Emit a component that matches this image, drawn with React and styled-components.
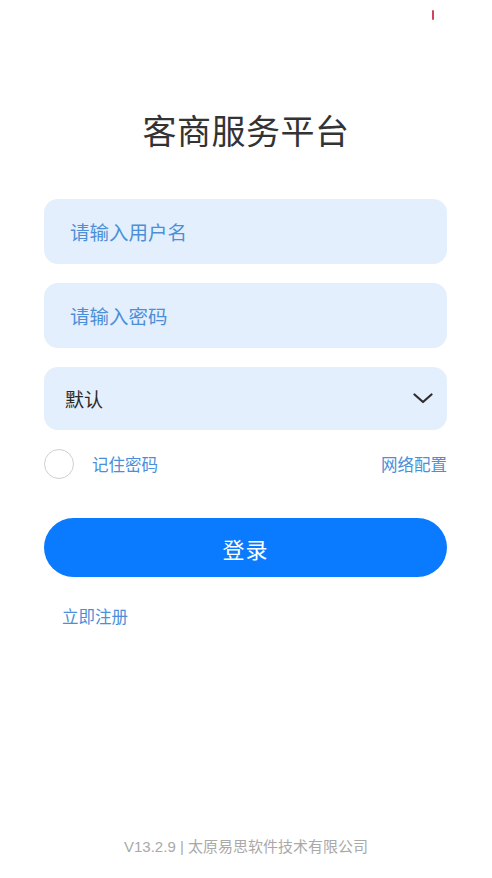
import React from "react";
import styled, { createGlobalStyle } from "styled-components";

const GlobalStyle = createGlobalStyle`
  html, body { margin: 0; padding: 0; background: #ffffff; }
  body { font-family: "Noto Sans CJK SC", "Noto Sans", sans-serif; }
  * { box-sizing: border-box; }
`;

const Page = styled.div`
  min-height: 100vh;
  display: flex;
  flex-direction: column;
  background: #ffffff;
`;

const StatusBar = styled.div`
  height: 30px;
  display: flex;
  justify-content: flex-end;
  align-items: flex-start;
  padding: 10px 58px 0 0;
`;

const RecordDot = styled.span`
  width: 2px;
  height: 10px;
  border-radius: 1px;
  background: #d0435f;
`;

const Title = styled.h1`
  margin: 80px 0 0;
  text-align: center;
  font-size: 34px;
  line-height: 40px;
  font-weight: 400;
  color: #333333;
  letter-spacing: 0.5px;
`;

const Form = styled.div`
  margin-top: 49px;
  padding: 0 45px 0 44px;
  display: flex;
  flex-direction: column;
`;

const Field = styled.input`
  height: 65px;
  border: none;
  outline: none;
  border-radius: 14px;
  background: #e4effd;
  padding: 0 26px;
  font-family: inherit;
  font-size: 19.5px;
  color: #333;
  margin-bottom: ${(p) => p.$gap || 0}px;
  &::placeholder { color: #4d8fd6; }
`;

const SelectBox = styled.div`
  height: 63px;
  border-radius: 14px;
  background: #e4effd;
  display: flex;
  align-items: center;
  justify-content: space-between;
  padding: 0 14px 0 21px;
  font-size: 19px;
  color: #2a2a2a;
`;

const OptionRow = styled.div`
  margin-top: 19px;
  height: 30px;
  display: flex;
  align-items: center;
  justify-content: space-between;
`;

const Remember = styled.label`
  display: flex;
  align-items: center;
  gap: 18px;
`;

const Circle = styled.span`
  width: 30px;
  height: 30px;
  border-radius: 50%;
  border: 1.5px solid #cfcfcf;
  background: #fff;
`;

const LinkText = styled.span`
  font-size: 16.5px;
  line-height: 22px;
  color: ${(p) => p.$color || "#4a8fd9"};
`;

const LoginButton = styled.button`
  margin-top: 39px;
  height: 59px;
  border: none;
  border-radius: 30px;
  background: #0a7bff;
  color: #ffffff;
  font-family: inherit;
  font-size: 22px;
  letter-spacing: 1px;
`;

const Register = styled.div`
  margin-top: 27px;
  padding-left: 18px;
`;

const Footer = styled.div`
  margin-top: auto;
  padding-bottom: 21px;
  text-align: center;
  font-size: 15px;
  line-height: 20px;
  color: #a9a9a9;
`;

const Version = styled.span`
  font-family: "Liberation Sans", "Noto Sans", sans-serif;
  font-size: 15px;
  white-space: pre;
`;

const Chevron = () => (
  <svg width="20" height="11" viewBox="0 0 20 11" fill="none">
    <path d="M1.5 1.5 L10 9 L18.5 1.5" stroke="#2d2d2d" strokeWidth="2.2" strokeLinecap="round" strokeLinejoin="round" />
  </svg>
);

export default function App() {
  return (
    <Page>
      <GlobalStyle />
      <StatusBar>
        <RecordDot />
      </StatusBar>
      <Title>客商服务平台</Title>
      <Form>
        <Field placeholder="请输入用户名" $gap={19} />
        <Field placeholder="请输入密码" type="password" $gap={19} />
        <SelectBox>
          <span>默认</span>
          <Chevron />
        </SelectBox>
        <OptionRow>
          <Remember>
            <Circle />
            <LinkText>记住密码</LinkText>
          </Remember>
          <LinkText>网络配置</LinkText>
        </OptionRow>
        <LoginButton>登录</LoginButton>
        <Register>
          <LinkText>立即注册</LinkText>
        </Register>
      </Form>
      <Footer>
        <Version>{"V13.2.9 | "}</Version>太原易思软件技术有限公司
      </Footer>
    </Page>
  );
}
